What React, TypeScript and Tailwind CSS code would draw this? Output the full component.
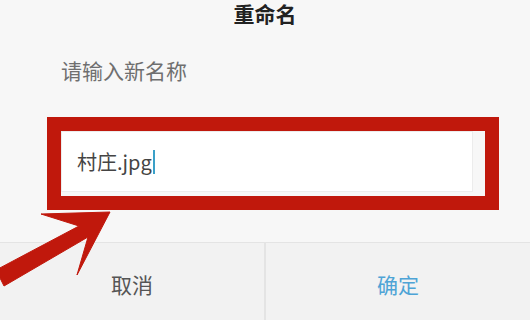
import React from "react";

export default function App() {
  return (
    <div
      className="relative w-[530px] h-[320px] overflow-hidden bg-[#f7f7f7] flex flex-col"
      style={{ fontFamily: '"Noto Sans CJK SC", "Noto Sans", sans-serif' }}
    >
      <div className="h-[25px] pt-[1px] text-center text-[21px] leading-[24px] font-bold text-[#222]">
        重命名
      </div>
      <div className="mt-[30px] ml-[61px] text-[21px] leading-[30px] text-[#6f6f6f]">
        请输入新名称
      </div>
      <div className="mt-[32px] ml-[47px] w-[452px] h-[93px] border-[14px] border-[#c0180c] flex flex-col">
        <div className="w-[412px] h-[61px] bg-white border border-[#ececec] flex items-center pl-[15px]">
          <span className="text-[20px] leading-[28px] text-[#444]">村庄.jpg</span>
          <span className="ml-[1px] w-[2px] h-[24px] bg-[#3aa0c8]" />
        </div>
      </div>
      <div className="mt-[32px] flex-1 flex border-t border-[#e4e4e4] bg-[#f2f2f2]">
        <div className="flex-1 flex items-center justify-center pt-[6px] border-r-2 border-[#e4e4e4] text-[21px] text-[#555]">
          取消
        </div>
        <div className="flex-1 flex items-center justify-center pt-[6px] text-[21px] text-[#4ea4d6]">
          确定
        </div>
      </div>
      <svg
        className="absolute left-0 top-0 pointer-events-none"
        width="530"
        height="320"
        viewBox="0 0 530 320"
      >
        <polygon
          points="110,212 41,214 79,226 -4,270 4,286 88,237 77,275"
          fill="#c0180c"
          stroke="#c0180c"
          strokeWidth="1"
          strokeLinejoin="round"
        />
      </svg>
    </div>
  );
}
